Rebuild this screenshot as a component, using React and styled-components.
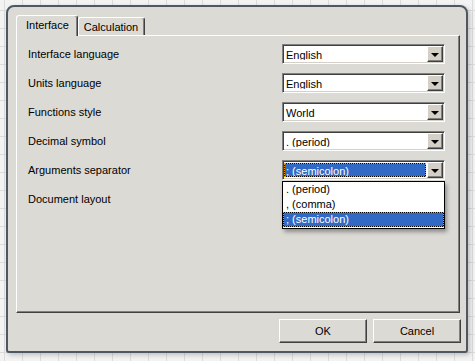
import styled, { createGlobalStyle } from "styled-components";

const GlobalStyle = createGlobalStyle`
  html, body {
    margin: 0;
    padding: 0;
  }
  body {
    background-color: #f3f3f3;
    background-image:
      linear-gradient(#dcdcdc 1px, transparent 1px),
      linear-gradient(90deg, #dcdcdc 1px, transparent 1px);
    background-size: 18px 18px;
    background-position: 4px 10px;
    font-family: "Liberation Sans", Arial, sans-serif;
    font-size: 11px;
    color: #000;
  }
`;

const Page = styled.div`
  height: 361px;
  padding: 5px 0 0 6px;
  box-sizing: border-box;
  overflow: hidden;
`;

const Window = styled.div`
  box-sizing: border-box;
  width: 462px;
  height: 348px;
  border: 2px solid #4e5863;
  border-radius: 8px 8px 3px 3px;
  background: #dcdad5;
  padding: 9px 6px 0 8px;
  box-shadow: 2px 2px 5px rgba(0, 0, 0, 0.22);
`;

const TabStrip = styled.div`
  display: flex;
  align-items: flex-end;
  height: 19px;
  position: relative;
  z-index: 1;
`;

const Tab = styled.div`
  box-sizing: border-box;
  height: ${({ $active }) => ($active ? "21px" : "18px")};
  margin-bottom: ${({ $active }) => ($active ? "-1px" : "0")};
  padding: ${({ $active }) => ($active ? "3px 8px 0 9px" : "3px 6px 0 5px")};
  background: #dcdad5;
  border-top: 1px solid #fff;
  border-left: 1px solid #fff;
  border-right: 1px solid #404040;
  box-shadow: inset -1px 0 #808080;
  border-radius: 3px 3px 0 0;
  line-height: 13px;
  white-space: nowrap;
`;

const Panel = styled.div`
  box-sizing: border-box;
  width: 444px;
  height: 278px;
  border-top: 1px solid #fff;
  border-left: 1px solid #fff;
  border-right: 1px solid #404040;
  border-bottom: 1px solid #404040;
  box-shadow: inset -1px -1px #808080;
  padding: 8px 0 0 11px;
  display: flex;
  flex-direction: column;
  gap: 9px;
`;

const Row = styled.div`
  display: grid;
  grid-template-columns: 254px 163px;
  align-items: center;
  height: 20px;
`;

const Label = styled.span`
  line-height: 13px;
`;

const ComboWrap = styled.div`
  position: relative;
`;

const Combo = styled.div`
  box-sizing: border-box;
  width: 163px;
  height: 20px;
  display: flex;
  align-items: stretch;
  border: 1px solid;
  border-color: #808080 #fff #fff #808080;
  box-shadow: inset 1px 1px #404040, inset -1px -1px #d4d0c8;
  background: #fff;
  padding: 1px;
`;

const ComboText = styled.div`
  flex: 1;
  box-sizing: border-box;
  padding: 0 0 0 1px;
  margin: 1px 1px 1px 0;
  line-height: 14px;
  white-space: nowrap;
  overflow: hidden;
  background: ${({ $focused }) => ($focused ? "#316ac5" : "transparent")};
  color: ${({ $focused }) => ($focused ? "#fff" : "#000")};
  border: 1px solid ${({ $focused }) => ($focused ? "#000" : "transparent")};
  outline: ${({ $focused }) => ($focused ? "1px dotted #f0a000" : "none")};
  outline-offset: -1px;
`;

const ArrowButton = styled.div`
  box-sizing: border-box;
  width: 16px;
  display: flex;
  align-items: center;
  justify-content: center;
  background: #d4d0c8;
  border-top: 1px solid #fff;
  border-left: 1px solid #fff;
  border-right: 1px solid #404040;
  border-bottom: 1px solid #404040;
  box-shadow: inset -1px -1px #808080;
`;

const Arrow = styled.div`
  width: 0;
  height: 0;
  border-left: 4px solid transparent;
  border-right: 4px solid transparent;
  border-top: 4px solid #000;
  margin-top: 1px;
`;

const List = styled.div`
  position: absolute;
  top: 100%;
  left: 0;
  width: 163px;
  box-sizing: border-box;
  margin-top: 1px;
  background: #fff;
  border: 1px solid #000;
  padding-bottom: 1px;
  box-shadow: 2px 3px 4px rgba(0, 0, 0, 0.35);
  z-index: 5;
`;

const ListItem = styled.div`
  box-sizing: border-box;
  height: 15px;
  line-height: 13px;
  padding-left: 2px;
  white-space: nowrap;
  background: ${({ $selected }) => ($selected ? "#316ac5" : "#fff")};
  color: ${({ $selected }) => ($selected ? "#fff" : "#000")};
  border: 1px solid ${({ $selected }) => ($selected ? "#000" : "transparent")};
  outline: ${({ $selected }) => ($selected ? "1px dotted #f0a000" : "none")};
  outline-offset: -1px;
`;

const ButtonRow = styled.div`
  display: flex;
  justify-content: flex-end;
  gap: 6px;
  margin-top: 6px;
  width: 445px;
`;

const Button = styled.button`
  box-sizing: border-box;
  width: 88px;
  height: 24px;
  background: #dcdad5;
  border-top: 1px solid #fff;
  border-left: 1px solid #fff;
  border-right: 1px solid #404040;
  border-bottom: 1px solid #404040;
  box-shadow: inset -1px -1px #808080;
  font-family: "Liberation Sans", Arial, sans-serif;
  font-size: 11px;
  color: #000;
  padding: 0;
  border-radius: 0;
`;

const ComboBox = ({ value, focused, options }) => (
  <ComboWrap>
    <Combo>
      <ComboText $focused={focused}>{value}</ComboText>
      <ArrowButton>
        <Arrow />
      </ArrowButton>
    </Combo>
    {options && (
      <List>
        {options.map((o) => (
          <ListItem key={o} $selected={o === value}>
            {o}
          </ListItem>
        ))}
      </List>
    )}
  </ComboWrap>
);

const rows = [
  { label: "Interface language", value: "English" },
  { label: "Units language", value: "English" },
  { label: "Functions style", value: "World" },
  { label: "Decimal symbol", value: ". (period)" },
  {
    label: "Arguments separator",
    value: "; (semicolon)",
    focused: true,
    options: [". (period)", ", (comma)", "; (semicolon)"],
  },
  // combo under the open list; its text is hidden in the screenshot
  { label: "Document layout", value: "" },
];

export default function App() {
  return (
    <>
      <GlobalStyle />
      <Page>
        <Window>
          <TabStrip>
            <Tab $active>Interface</Tab>
            <Tab>Calculation</Tab>
          </TabStrip>
          <Panel>
            {rows.map((r) => (
              <Row key={r.label}>
                <Label>{r.label}</Label>
                <ComboBox value={r.value} focused={r.focused} options={r.options} />
              </Row>
            ))}
          </Panel>
          <ButtonRow>
            <Button>OK</Button>
            <Button>Cancel</Button>
          </ButtonRow>
        </Window>
      </Page>
    </>
  );
}
